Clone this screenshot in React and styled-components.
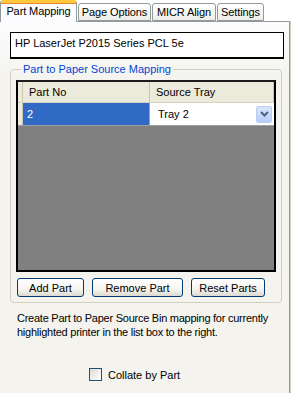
import styled, { createGlobalStyle } from "styled-components"

const Global = createGlobalStyle`
  html, body {
    margin: 0;
    padding: 0;
    background: #ffffff;
  }
  body {
    font-family: "Liberation Sans", Arial, sans-serif;
    font-size: 11px;
    color: #000;
  }
`

const tabs = [
  { label: "Part Mapping", width: 77, active: true },
  { label: "Page Options", width: 73 },
  { label: "MICR Align", width: 64 },
  { label: "Settings", width: 47 },
]

export default function App() {
  return (
    <>
      <Global />
      <Window>
        <TabBar>
          {tabs.map((t) => (
            <Tab key={t.label} $active={t.active} $w={t.width}>
              {t.label}
            </Tab>
          ))}
        </TabBar>

        <Page>
          <PrinterBox>HP LaserJet P2015 Series PCL 5e</PrinterBox>

          <Group>
            <Legend>Part to Paper Source Mapping</Legend>
            <Grid>
              <HeaderRow>
                <RowHead />
                <HeadCell $w={127}>Part No</HeadCell>
                <HeadCell>Source Tray</HeadCell>
              </HeaderRow>
              <DataRow>
                <RowHead />
                <SelCell>2</SelCell>
                <ComboCell>
                  <span>Tray 2</span>
                  <DropBtn>
                    <svg width="9" height="6" viewBox="0 0 9 6">
                      <path d="M1 1 L4.5 4.5 L8 1" fill="none" stroke="#4d6185" strokeWidth="2" />
                    </svg>
                  </DropBtn>
                </ComboCell>
              </DataRow>
            </Grid>

            <ButtonRow>
              <Button $w={67}>Add Part</Button>
              <Button $w={91}>Remove Part</Button>
              <Button $w={74}>Reset Parts</Button>
            </ButtonRow>
          </Group>

          <Note>
            Create Part to Paper Source Bin mapping for currently highlighted printer in the list box to the right.
          </Note>

          <CheckRow>
            <CheckBox />
            <span>Collate by Part</span>
          </CheckRow>
        </Page>
      </Window>
    </>
  )
}

const Window = styled.div`
  width: 291px;
  height: 393px;
  display: flex;
  flex-direction: column;
  overflow: hidden;
  background: #fff;
`

const TabBar = styled.div`
  display: flex;
  align-items: flex-end;
  gap: 1px;
  height: 21px;
  flex-shrink: 0;
  position: relative;
  z-index: 1;
`

const Tab = styled.div`
  box-sizing: border-box;
  width: ${(p) => p.$w}px;
  height: ${(p) => (p.$active ? 22 : 18)}px;
  margin-bottom: ${(p) => (p.$active ? -1 : 0)}px;
  border: 1px solid #919b9c;
  border-bottom: ${(p) => (p.$active ? "none" : "1px solid #919b9c")};
  border-top: ${(p) => (p.$active ? "3px solid #ffc83c" : "1px solid #919b9c")};
  border-radius: 3px 3px 0 0;
  background: ${(p) =>
    p.$active ? "#fcfcfe" : "linear-gradient(#ffffff, #f3f3ef 70%, #ecebe6)"};
  display: flex;
  align-items: center;
  justify-content: center;
  padding-bottom: ${(p) => (p.$active ? 3 : 0)}px;
  font-size: 11px;
  letter-spacing: -0.1px;
  white-space: nowrap;
  ${(p) => p.$active && "box-shadow: inset 0 1px 0 #e68b2c;"}
`

const Page = styled.div`
  box-sizing: border-box;
  width: 290px;
  flex: 1;
  border-top: 1px solid #919b9c;
  border-right: 1px solid #919b9c;
  box-shadow: 1px 0 0 #d0d0bf;
  background: linear-gradient(#fcfcfe, #f4f3ee 60px, #f4f3ee);
  display: flex;
  flex-direction: column;
`

const PrinterBox = styled.div`
  box-sizing: border-box;
  margin: 10px 5px 0 10px;
  height: 27px;
  border: 1px solid #000;
  border-bottom-width: 2px;
  background: #fff;
  padding: 4px 0 0 4px;
  font-size: 11px;
`

const Group = styled.fieldset`
  margin: 4px 7px 0 10px;
  padding: 4px 5px 5px 5px;
  border: 1px solid #d0d0bf;
  border-radius: 4px;
  min-width: 0;
`

const Legend = styled.legend`
  color: #0046d5;
  padding: 0 2px;
  margin-left: 5px;
  font-size: 11px;
  line-height: 13px;
`

const Grid = styled.div`
  box-sizing: border-box;
  height: 192px;
  border: 2px solid #000;
  border-top-color: #1c1c1c;
  background: #808080;
`

const HeaderRow = styled.div`
  display: flex;
  height: 20px;
  background: #ebeadb;
  border-bottom: 1px solid #d6d2c2;
`

const RowHead = styled.div`
  width: 4px;
  flex-shrink: 0;
  background: #ebeadb;
  border-right: 1px solid #c7c5b2;
`

const HeadCell = styled.div`
  box-sizing: border-box;
  ${(p) => (p.$w ? `width: ${p.$w}px; flex-shrink: 0;` : "flex: 1;")}
  display: flex;
  align-items: center;
  padding-left: 6px;
  border-right: 1px solid #c7c5b2;
  font-size: 11px;
`

const DataRow = styled.div`
  display: flex;
  height: 22px;
  border-bottom: 1px solid #a0a0a0;
`

const SelCell = styled.div`
  box-sizing: border-box;
  width: 127px;
  flex-shrink: 0;
  background: #316ac5;
  color: #fff;
  display: flex;
  align-items: center;
  padding-left: 4px;
  border-right: 1px solid #a0a0a0;
`

const ComboCell = styled.div`
  flex: 1;
  background: #fff;
  display: flex;
  align-items: center;
  justify-content: space-between;
  padding: 0 2px 0 8px;
`

const DropBtn = styled.div`
  box-sizing: border-box;
  width: 16px;
  height: 17px;
  border: 1px solid #b9cdf5;
  border-radius: 2px;
  background: linear-gradient(#dbe6fd, #b7cdfa);
  display: flex;
  align-items: center;
  justify-content: center;
`

const ButtonRow = styled.div`
  display: flex;
  gap: 8px;
  margin: 6px 0 0 1px;
`

const Button = styled.button`
  box-sizing: border-box;
  width: ${(p) => p.$w}px;
  height: 19px;
  padding: 0;
  border: 1px solid #003c74;
  border-radius: 3px;
  background: linear-gradient(#ffffff, #f5f4f0 60%, #dcdad0);
  font-family: "Liberation Sans", Arial, sans-serif;
  font-size: 11px;
  color: #000;
`

const Note = styled.p`
  margin: 8px 0 0 17px;
  line-height: 14px;
  font-size: 11px;
  letter-spacing: -0.25px;
`

const CheckRow = styled.label`
  display: flex;
  align-items: center;
  gap: 6px;
  margin: 29px 0 0 89px;
  font-size: 11px;
`

const CheckBox = styled.span`
  box-sizing: border-box;
  width: 13px;
  height: 13px;
  border: 1px solid #1c5180;
  background: linear-gradient(135deg, #dcdcd7, #ffffff);
`
